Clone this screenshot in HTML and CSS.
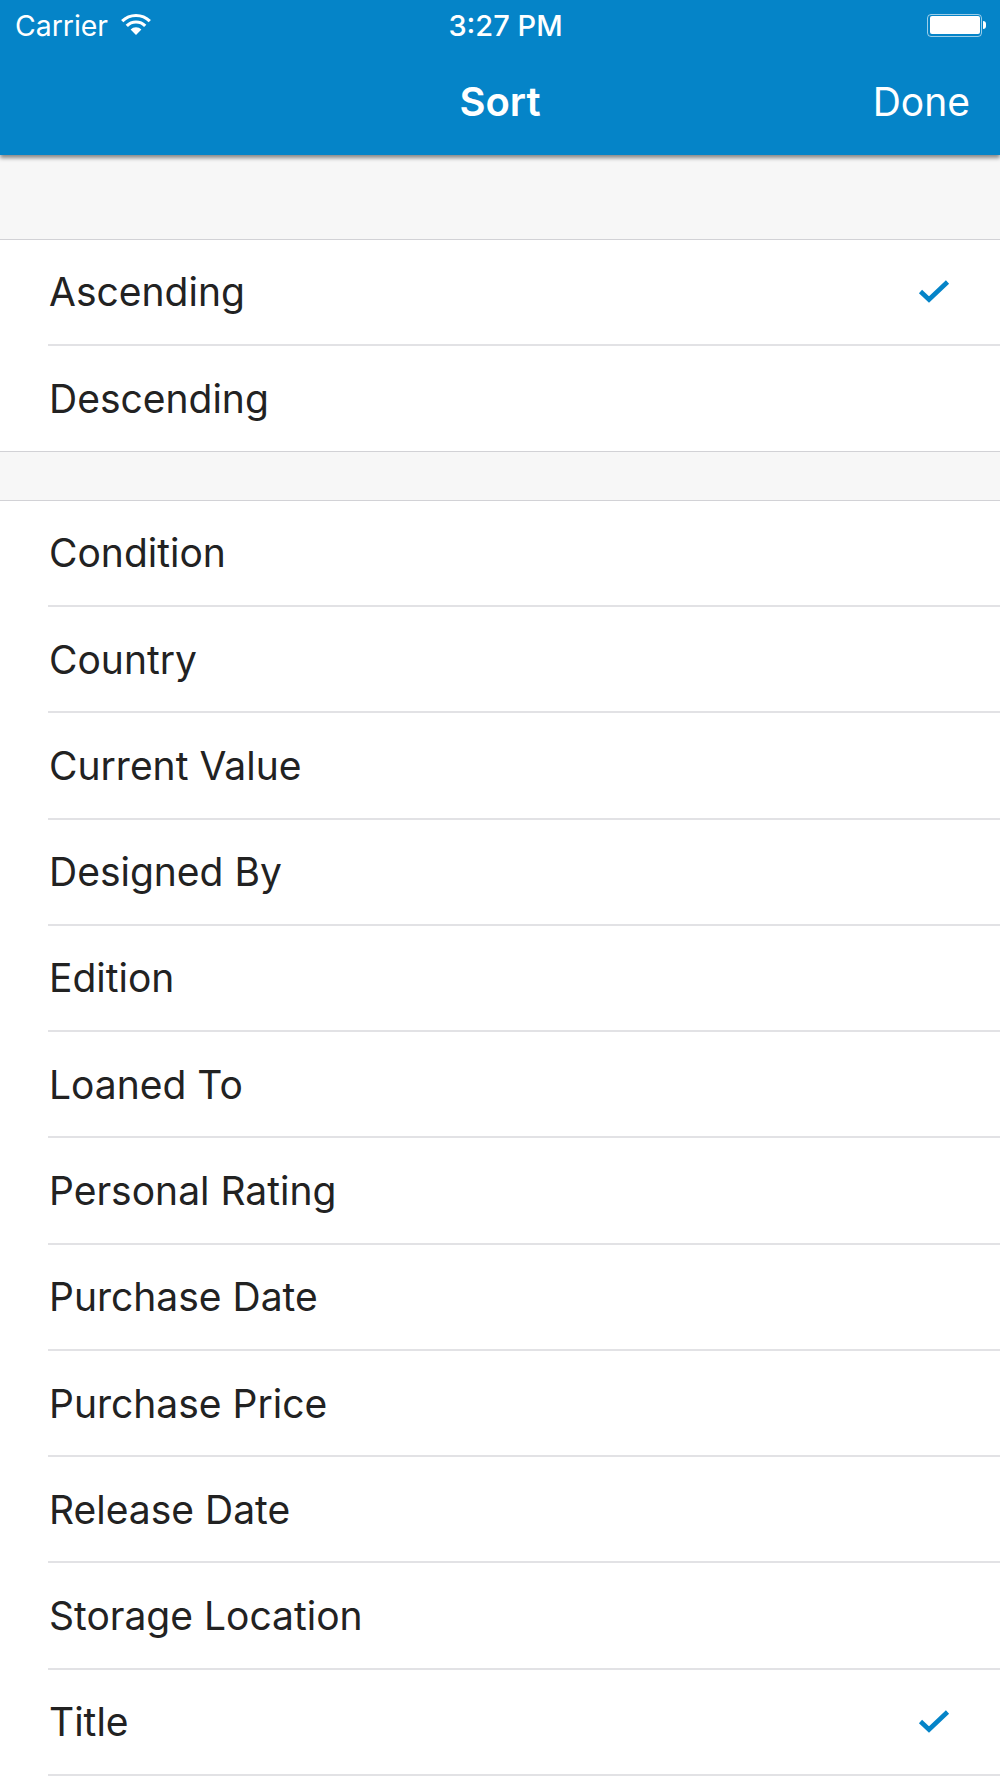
FILE: index.html
```html
<!DOCTYPE html>
<html lang="en">
<head>
<meta charset="utf-8">
<title>Sort</title>
<link rel="stylesheet" href="styles.css">
</head>
<body>
<div class="screen">
  <header class="header">
    <div class="status">
      <div class="status-left">
        <span>Carrier</span>
        <svg class="wifi" viewBox="0 0 30 22"><path d="M1.2 8.2A19.5 19.5 0 0 1 28.8 8.2M5.8 12.8A13 13 0 0 1 24.2 12.8" fill="none" stroke="#fff" stroke-width="3.2"/><path d="M15 22 9.6 16.5A7.6 7.6 0 0 1 20.4 16.5Z" fill="#fff"/></svg>
      </div>
      <div class="status-time">3:27 PM</div>
      <div class="status-right">
        <div class="battery"><div class="battery-fill"></div></div>
        <div class="battery-cap"></div>
      </div>
    </div>
    <nav class="nav">
      <div></div>
      <div class="nav-title">Sort</div>
      <div class="nav-done">Done</div>
    </nav>
  </header>
  <main>
    <div class="spacer spacer-first"></div>
    <ul class="group group-first">
      <li class="row"><span>Ascending</span><svg class="check" viewBox="0 0 32 26"><path d="M2.5 12.5 11 20.5 29.5 3" fill="none" stroke="#0584c8" stroke-width="4.6"/></svg></li>
      <li class="row"><span>Descending</span></li>
    </ul>
    <div class="spacer"></div>
    <ul class="group">
      <li class="row"><span>Condition</span></li>
      <li class="row"><span>Country</span></li>
      <li class="row"><span>Current Value</span></li>
      <li class="row"><span>Designed By</span></li>
      <li class="row"><span>Edition</span></li>
      <li class="row"><span>Loaned To</span></li>
      <li class="row"><span>Personal Rating</span></li>
      <li class="row"><span>Purchase Date</span></li>
      <li class="row"><span>Purchase Price</span></li>
      <li class="row"><span>Release Date</span></li>
      <li class="row"><span>Storage Location</span></li>
      <li class="row"><span>Title</span><svg class="check" viewBox="0 0 32 26"><path d="M2.5 12.5 11 20.5 29.5 3" fill="none" stroke="#0584c8" stroke-width="4.6"/></svg></li>
    </ul>
  </main>
</div>
</body>
</html>
```
FILE: styles.css
```css
* { box-sizing: border-box; }
html, body { margin: 0; padding: 0; background: #fff; }
body { font-family: Inter, "Liberation Sans", sans-serif; color: #222; }
.screen { width: 1000px; height: 1778px; overflow: hidden; display: flex; flex-direction: column; }
.header {
  height: 155px; background: #0584c8; color: #fff; flex: none;
  box-shadow: 0 3px 4px rgba(0,0,0,.45); position: relative; z-index: 1;
}
.status {
  height: 50px; display: grid; grid-template-columns: 1fr auto 1fr; align-items: center;
  font-size: 28.4px; padding: 0 14px 0 15px;
}
.status-left { display: flex; align-items: center; gap: 13px; }
.wifi { width: 30px; height: 22px; margin-top: -3px; }
.status-time { font-size: 29px; font-weight: 500; padding-left: 10px; }
.status-right { display: flex; justify-content: flex-end; align-items: center; }
.battery { width: 55px; height: 23px; border: 1.5px solid rgba(255,255,255,.6); border-radius: 4px; padding: 1.5px; }
.battery-fill { width: 100%; height: 100%; background: #fff; border-radius: 2px; }
.battery-cap { width: 3px; height: 8px; background: #fff; border-radius: 0 4px 4px 0; margin-left: 1px; }
.nav {
  height: 103px; display: grid; grid-template-columns: 1fr auto 1fr; align-items: center;
  font-size: 39px; padding: 0 30px;
}
.nav-title { font-size: 40px; font-weight: 600; }
.nav-done { text-align: right; }
main { flex: 1; }
.spacer { height: 49.6px; background: #f7f7f7; border-top: 1px solid #d2d2d6; border-bottom: 1px solid #d2d2d6; }
.spacer-first { height: 85px; border-top: 0; }
.group { list-style: none; margin: 0; padding: 0; }
.row {
  height: 106.27px; margin-left: 48px; padding-right: 50.5px; padding-left: 1px;
  display: flex; align-items: center; justify-content: space-between;
  font-size: 39px; font-weight: 380; border-bottom: 2px solid #e2e2e5;
}
.group-first .row { height: 105.6px; }
.group-first .row:last-child { border-bottom: 0; }
.check { width: 32px; height: 26px; }
```
